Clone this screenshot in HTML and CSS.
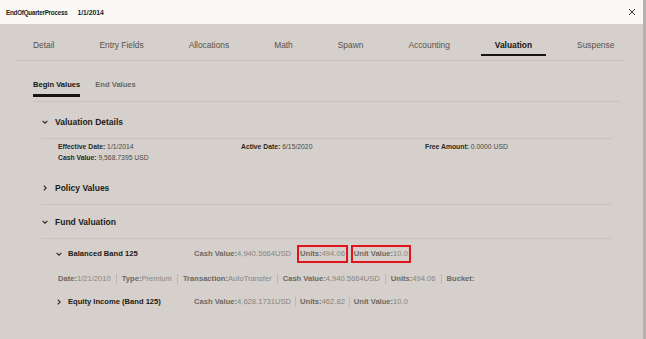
FILE: index.html
```html
<!DOCTYPE html>
<html>
<head>
<meta charset="utf-8">
<link rel="stylesheet" href="styles.css">
</head>
<body>
<div class="page">
  <div class="main">
    <header class="hdr">
      <div class="title"><span>EndOfQuarterProcess</span><span class="date">1/1/2014</span></div>
      <svg class="close" width="8" height="8" viewBox="0 0 8 8"><path d="M1 1L7 7M7 1L1 7" stroke="#3a3836" stroke-width="1" fill="none"/></svg>
    </header>
    <nav class="tabs">
      <span class="tab">Detail</span>
      <span class="tab">Entry Fields</span>
      <span class="tab">Allocations</span>
      <span class="tab">Math</span>
      <span class="tab">Spawn</span>
      <span class="tab">Accounting</span>
      <span class="tab active">Valuation</span>
      <span class="tab">Suspense</span>
    </nav>
    <nav class="subtabs">
      <span class="subtab active">Begin Values</span>
      <span class="subtab">End Values</span>
    </nav>
    <div class="sections">
      <section>
        <div class="sec-h"><svg class="chev" width="6" height="6" viewBox="0 0 6 6"><polyline points="0.6,1.8 3,4.2 5.4,1.8" fill="none" stroke="#2b2926" stroke-width="1.1"/></svg>Valuation Details</div>
        <div class="details">
          <div><b>Effective Date:</b> 1/1/2014</div>
          <div><b>Active Date:</b> 6/15/2020</div>
          <div><b>Free Amount:</b> 0.0000 USD</div>
          <div><b>Cash Value:</b> 9,568.7395 USD</div>
        </div>
      </section>
      <section>
        <div class="sec-h"><svg class="chev" width="6" height="6" viewBox="0 0 6 6"><polyline points="1.8,0.6 4.2,3 1.8,5.4" fill="none" stroke="#2b2926" stroke-width="1.1"/></svg>Policy Values</div>
      </section>
      <section>
        <div class="sec-h"><svg class="chev" width="6" height="6" viewBox="0 0 6 6"><polyline points="0.6,1.8 3,4.2 5.4,1.8" fill="none" stroke="#2b2926" stroke-width="1.1"/></svg>Fund Valuation</div>
        <div class="fund">
          <div class="fund-name"><svg class="chev" width="6" height="6" viewBox="0 0 6 6"><polyline points="0.6,1.8 3,4.2 5.4,1.8" fill="none" stroke="#2b2926" stroke-width="1.1"/></svg>Balanced Band 125</div>
          <div class="metrics">
            <span class="m"><b>Cash Value:</b>4,940.5664USD</span>
            <span class="m nosep"><span class="hl"><b>Units:</b>494.06</span></span>
            <span class="m nosep"><span class="hl"><b>Unit Value:</b>10.0</span></span>
          </div>
        </div>
        <div class="txn">
          <span class="m"><b>Date:</b>1/21/2010</span>
          <span class="m"><b>Type:</b>Premium</span>
          <span class="m"><b>Transaction:</b>AutoTransfer</span>
          <span class="m"><b>Cash Value:</b>4,940.5664USD</span>
          <span class="m"><b>Units:</b>494.06</span>
          <span class="m"><b>Bucket:</b></span>
        </div>
        <div class="fund last">
          <div class="fund-name"><svg class="chev" width="6" height="6" viewBox="0 0 6 6"><polyline points="1.8,0.6 4.2,3 1.8,5.4" fill="none" stroke="#2b2926" stroke-width="1.1"/></svg>Equity Income (Band 125)</div>
          <div class="metrics">
            <span class="m"><b>Cash Value:</b>4,628.1731USD</span>
            <span class="m"><b>Units:</b>462.82</span>
            <span class="m"><b>Unit Value:</b>10.0</span>
          </div>
        </div>
      </section>
    </div>
  </div>
  <div class="scroll"></div>
</div>
</body>
</html>
```
FILE: styles.css
```css
* { box-sizing: border-box; }
body {
  margin: 0;
  font-family: "Liberation Sans", Arial, sans-serif;
  background: #d5d0cb;
}
.page {
  display: flex;
  width: 646px;
  height: 339px;
  overflow: hidden;
  background: #d5d0cb;
}
.main {
  flex: 1;
  display: flex;
  flex-direction: column;
  min-width: 0;
}
.scroll {
  width: 3px;
  background: #b7b2ad;
}
.hdr {
  height: 24px;
  background: #f9f8f7;
  display: flex;
  align-items: center;
  justify-content: space-between;
  padding: 0 7px 0 6px;
}
.title {
  display: flex;
  gap: 10px;
  font-size: 6.3px;
  font-weight: bold;
  letter-spacing: -0.25px;
  color: #1c1b19;
}
.title .date {
  font-size: 6.8px;
  letter-spacing: 0;
}
.tabs {
  display: flex;
  gap: 17px;
  margin: 0 19px 0 16px;
  padding: 0 0 4px 3px;
  border-bottom: 1px solid #c8c3be;
}
.tab {
  flex-shrink: 0;
  white-space: nowrap;
  padding: 16px 14px 4px 14px;
  font-size: 8.4px;
  line-height: 10px;
  color: #57524e;
  border-bottom: 2.5px solid transparent;
}
.tab.active {
  color: #161513;
  font-weight: bold;
  border-bottom-color: #161513;
}
.subtabs {
  display: flex;
  gap: 15px;
  margin: 0 23px 0 33px;
  padding: 19px 0 4px;
  border-bottom: 1px solid #c8c3be;
}
.subtab {
  white-space: nowrap;
  font-size: 7.6px;
  line-height: 10px;
  font-weight: bold;
  color: #6b6661;
  padding-bottom: 4px;
  border-bottom: 3px solid transparent;
}
.subtab.active {
  color: #161513;
  border-bottom-color: #161513;
}
.sections {
  margin: 3px 31px 0 41px;
}
.sec-h {
  height: 34px;
  border-bottom: 1px solid #c8c3be;
  display: flex;
  align-items: center;
  gap: 7px;
  padding-left: 1px;
  font-size: 8.5px;
  font-weight: bold;
  color: #1c1b19;
}
.details {
  display: grid;
  grid-template-columns: 183px 184px 1fr;
  padding: 2px 0 8px 17px;
  font-size: 6.8px;
  line-height: 11px;
  color: #4d4945;
}
.details b { color: #2b2926; }
.fund {
  display: flex;
  align-items: center;
  height: 29px;
  padding-left: 15px;
  font-size: 7.6px;
  white-space: nowrap;
}
.fund.last { height: 25px; }
.fund-name {
  display: flex;
  align-items: center;
  gap: 6px;
  width: 138px;
  font-weight: bold;
  color: #1c1b19;
}
.metrics {
  display: flex;
  align-items: center;
}
.txn {
  display: flex;
  align-items: center;
  height: 21px;
  padding-left: 17px;
  font-size: 7.6px;
  white-space: nowrap;
}
.txn .m { padding: 0 5px; }
.txn .m:first-child { padding-left: 0; }
.m {
  padding: 0 4px;
  border-left: 1px solid #bdb8b3;
  color: #8a8580;
  line-height: 10px;
}
.m:first-child {
  border-left: 0;
  padding-left: 0;
}
.m.nosep { border-left-color: transparent; }
.m b { color: #6e6964; }
.hl {
  display: inline-block;
  border: 2px solid #e0141c;
  padding: 2px 1px;
  margin: 0 -3px;
  line-height: 10px;
}
```
